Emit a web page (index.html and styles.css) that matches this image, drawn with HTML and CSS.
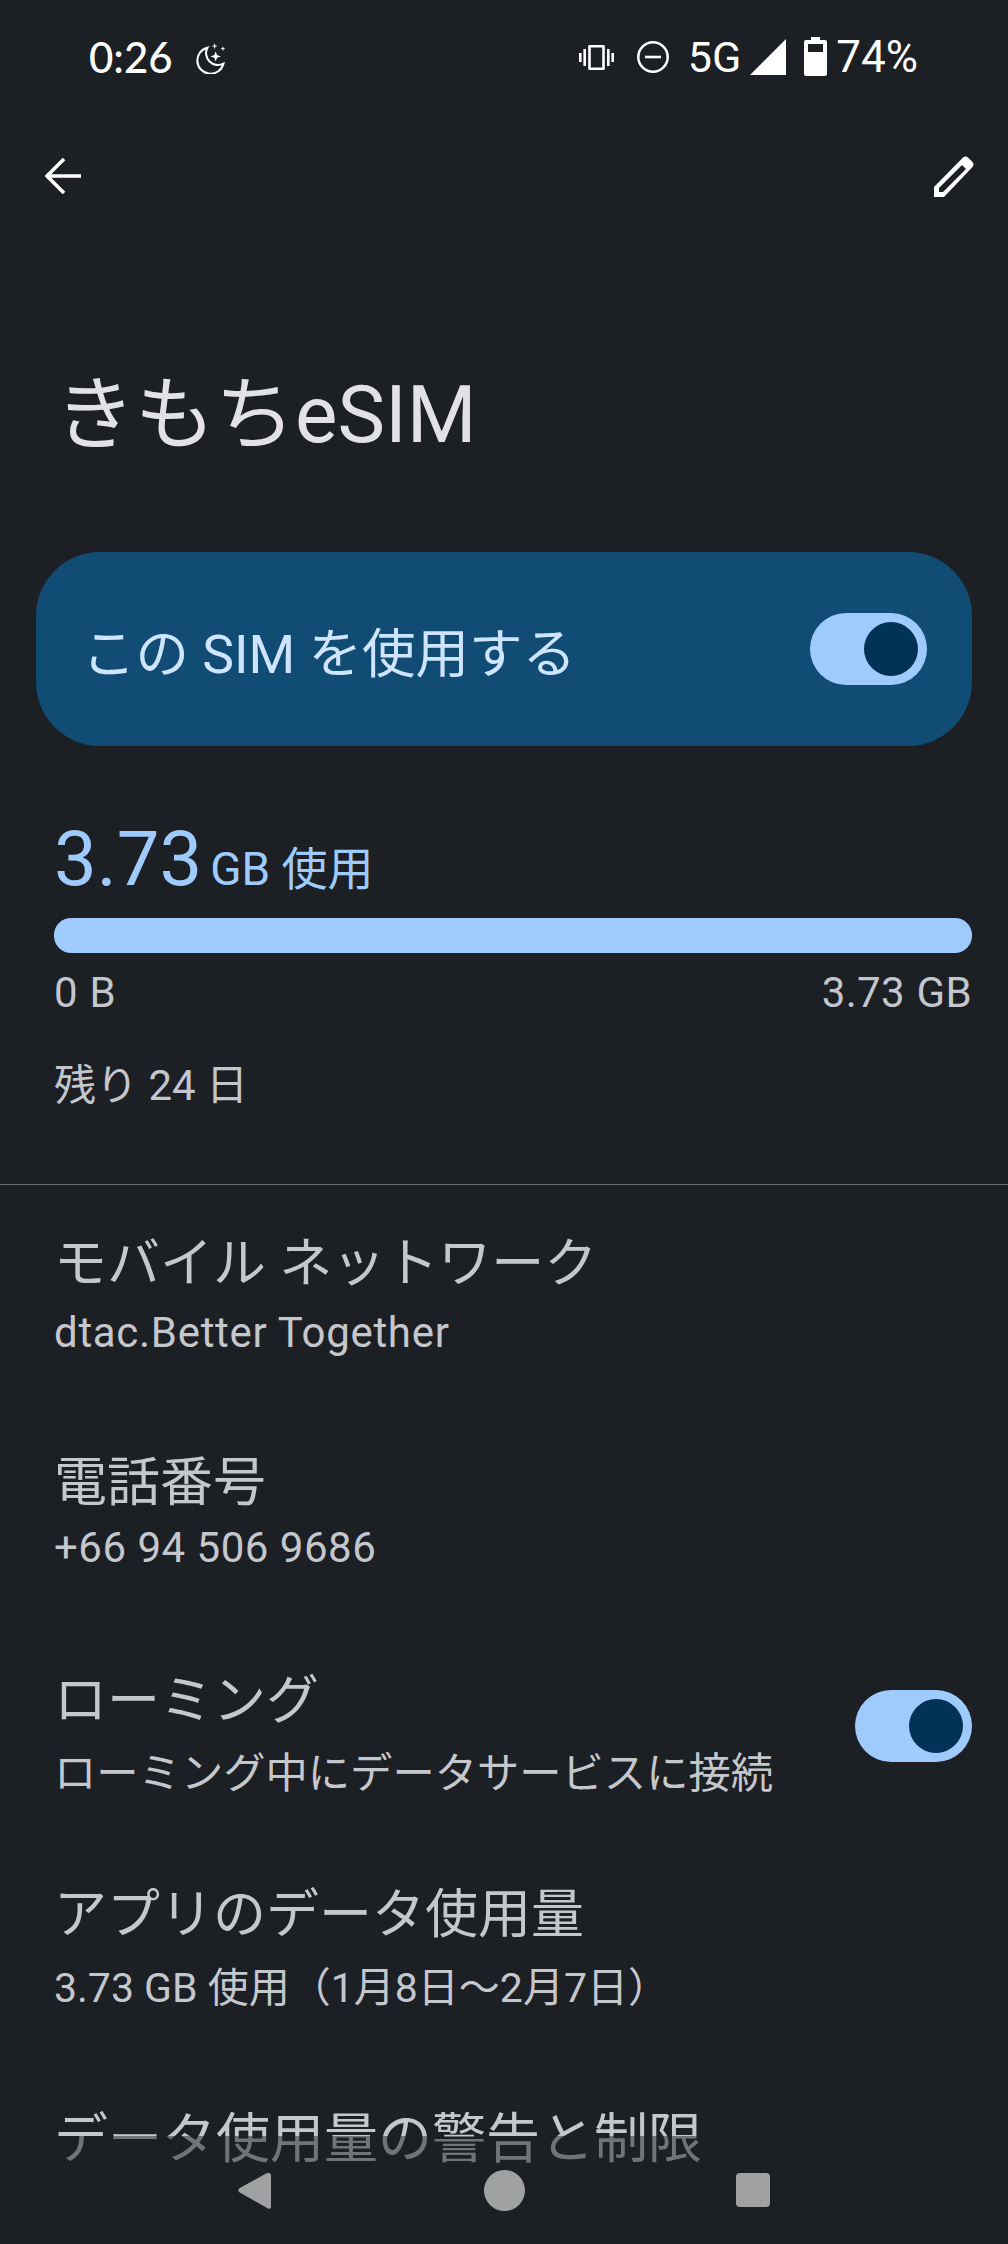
FILE: index.html
```html
<!DOCTYPE html>
<html lang="ja">
<head>
<meta charset="utf-8">
<title>きもちeSIM</title>
<link rel="stylesheet" href="styles.css">
</head>
<body>
<div class="page">
  <header class="status">
    <div class="status-left">
      <span class="time">0:26</span>
      <svg class="moon" viewBox="0 0 30 30"><path d="M12 4.500A12.800 12.800 0 1 0 27.500 20 11.500 11.500 0 0 1 12 4.500Z" fill="none" stroke="#fff" stroke-width="2"/><path d="M20 8l1.300 3.700L25 13l-3.700 1.300L20 18l-1.300-3.700L15 13l3.700-1.300ZM19 0l.7 2.300L22 3l-2.300.7L19 6l-.7-2.300L16 3l2.300-.7ZM27 3l.6 1.900 1.900.6-1.900.6L27 8l-.6-1.900-1.900-.6 1.900-.6Z" fill="#fff"/></svg>
    </div>
    <div class="status-right">
      <svg class="vib" viewBox="0 0 35 25"><path d="M10.500 1.300h14v22.400h-14Z" fill="none" stroke="#fff" stroke-width="2.600" stroke-linejoin="round"/><path d="M5.700 4v17M1.300 8v9M29.300 4v17M33.700 8v9" stroke="#fff" stroke-width="2.600" fill="none"/></svg>
      <svg class="dnd" viewBox="0 0 32 32"><circle cx="16" cy="16" r="14.700" fill="none" stroke="#fff" stroke-width="2.500"/><path d="M8 16h16" stroke="#fff" stroke-width="2.600"/></svg>
      <span class="net">5G</span>
      <svg class="signal" viewBox="0 0 36 36"><path d="M36 0v36H0Z" fill="#fff"/></svg>
      <svg class="batt" viewBox="0 0 23 39"><path d="M7 0h9v3h5a2 2 0 0 1 2 2v32a2 2 0 0 1-2 2H2a2 2 0 0 1-2-2V5a2 2 0 0 1 2-2h5Z" fill="#fff"/><path d="M4 7h15v8H4Z" fill="#1c1f24"/></svg>
      <span class="pct">74%</span>
    </div>
  </header>

  <nav class="appbar">
    <svg class="back" viewBox="0 0 36 36"><path d="M36 18H2M19 1 2 18l17 17" fill="none" stroke="#fff" stroke-width="3.600"/></svg>
    <svg class="edit" viewBox="0 0 42 42"><path fill-rule="evenodd" d="M1 32 30 2.500a4 4 0 0 1 5 0l4.500 4.500a4 4 0 0 1 0 5L11 42H1ZM6 33v4h4L33 14l-4-4Z" fill="#fff"/></svg>
  </nav>

  <h1 class="title">きもちeSIM</h1>

  <section class="sim-card">
    <span class="sim-label">この SIM を使用する</span>
    <span class="switch"><span class="thumb"></span></span>
  </section>

  <section class="usage">
    <div class="usage-head"><span class="usage-num">3.73</span><span class="usage-unit">GB 使用</span></div>
    <div class="bar"></div>
    <div class="bar-labels"><span>0 B</span><span>3.73 GB</span></div>
    <div class="remain">残り 24 日</div>
  </section>

  <hr class="divider">

  <ul class="list">
    <li class="row r1"><div><div class="row-title">モバイル ネットワーク</div><div class="row-sub latin">dtac.Better Together</div></div></li>
    <li class="row r2"><div><div class="row-title">電話番号</div><div class="row-sub latin">+66 94 506 9686</div></div></li>
    <li class="row r3"><div><div class="row-title">ローミング</div><div class="row-sub">ローミング中にデータサービスに接続</div></div><span class="switch"><span class="thumb"></span></span></li>
    <li class="row r4"><div><div class="row-title">アプリのデータ使用量</div><div class="row-sub mixed">3.73 GB 使用（1月8日～2月7日）</div></div></li>
    <li class="row r5"><div><div class="row-title">データ使用量の警告と制限</div></div></li>
  </ul>

  <footer class="navbar">
    <svg class="nav-back" viewBox="0 0 33 37"><path d="M31 1a2 2 0 0 1 2 2v32a2 2 0 0 1-3 1.500L1 20a3 3 0 0 1 0-3.500L29 1Z" fill="#a0a1a3"/></svg>
    <span class="nav-home"></span>
    <span class="nav-recent"></span>
  </footer>
</div>
</body>
</html>
```

FILE: styles.css
```css
* { box-sizing: border-box; }
html, body { margin: 0; padding: 0; }
body {
  background: #1c1f24;
  font-family: "Roboto", "Noto Sans CJK JP", sans-serif;
  color: #e2e2e6;
}
.page {
  position: relative;
  width: 1008px;
  height: 2244px;
  overflow: hidden;
  background: #1c1f24;
  display: flex;
  flex-direction: column;
}
.status {
  height: 80px;
  padding: 34px 90px 0 89px;
  display: flex;
  justify-content: space-between;
  flex: none;
}
.status-left, .status-right { display: flex; align-items: flex-start; }
.time {
  font-family: "Lato", "Roboto", sans-serif;
  font-size: 42px;
  font-weight: 500;
  line-height: 46px;
  color: #fff;
}
.moon { width: 31px; height: 31px; margin: 9px 0 0 22px; }
.vib { width: 35px; height: 25px; margin: 11px 23px 0 0; }
.dnd { width: 32px; height: 32px; margin: 7px 19px 0 0; }
.net, .pct {
  font-family: "Roboto", sans-serif;
  line-height: 46px;
  color: #fff;
}
.net { font-size: 43px; margin-right: 9px; }
.pct { font-size: 44px; }
.signal { width: 36px; height: 36px; margin: 5px 18px 0 0; }
.batt { width: 23px; height: 39px; margin: 3px 9px 0 0; }
.appbar {
  flex: none;
  height: 118px;
  padding: 0 33px 0 45px;
  display: flex;
  justify-content: space-between;
  align-items: flex-start;
}
.back { width: 36px; height: 36px; margin-top: 78px; }
.edit { width: 42px; height: 42px; margin-top: 75px; }
.title {
  margin: 167px 0 0;
  flex: none;
  padding: 0 0 0 55px;
  font-size: 80px;
  font-weight: 400;
  line-height: 100px;
  color: #e2e2e6;
}
.sim-card {
  flex: none;
  margin: 87px 36px 0;
  height: 194px;
  border-radius: 64px;
  background: #114c74;
  padding: 0 45px 0 46px;
  display: flex;
  justify-content: space-between;
  align-items: center;
}
.sim-label { font-size: 53.5px; color: #cfe5ff; }
.switch {
  flex: none;
  width: 117px;
  height: 72px;
  border-radius: 36px;
  background: #9ecafc;
  display: flex;
  align-items: center;
  justify-content: flex-end;
  padding-right: 9px;
}
.thumb { width: 54px; height: 54px; border-radius: 50%; background: #003258; }
.usage { flex: none; padding: 0 36px 0 54px; margin-top: 69px; }
.usage-head { display: flex; align-items: baseline; color: #9ecafc; height: 88px; line-height: 88px; }
.usage-num { font-size: 76px; }
.usage-unit { font-size: 46px; margin-left: 8px; }
.bar { height: 35px; border-radius: 17px; background: #9ecafc; margin-top: 15px; }
.bar-labels {
  display: flex;
  justify-content: space-between;
  font-size: 42px;
  letter-spacing: 0.3px;
  word-spacing: 1px;
  line-height: 50px;
  margin-top: 15px;
  color: #c3c6cc;
}
.remain { font-size: 42px; line-height: 56px; margin-top: 40px; color: #c3c6cc; }
.divider { flex: none; width: 100%; height: 1px; margin: 70px 0 0; border: 0; background: #6a6d72; }
.list { list-style: none; margin: 0; padding: 0 36px 0 54px; flex: none; }
.row { display: flex; justify-content: space-between; align-items: center; }
.row-title { font-size: 53px; line-height: 70px; color: #c4c7cc; }
.row-sub { font-size: 42.3px; line-height: 56px; margin-top: 5px; color: #c4c7cc; white-space: nowrap; }
.latin { font-size: 42px; letter-spacing: 0.7px; }
.r2 .latin { letter-spacing: 0.5px; }
.mixed { font-size: 41px; }
.r1 { margin-top: 44px; }
.r1 .row-sub { margin-top: 6px; }
.r2 { margin-top: 87px; }
.r2 .row-sub { margin-top: 2px; }
.r3 { margin-top: 90px; }
.r3 .row-sub { margin-top: 10px; }
.r3 .switch { margin-bottom: 16px; }
.r4 { margin-top: 78px; }
.r4 .row-sub { margin-top: 10px; }
.r5 { margin-top: 89px; }
.r5 .row-title { font-size: 54px; }
.navbar {
  position: absolute;
  left: 0;
  right: 0;
  bottom: 0;
  height: 108px;
  background: rgba(28, 31, 36, 0.5);
  padding: 34px 0 0 238px;
  display: flex;
  align-items: flex-start;
}
.nav-back { width: 33px; height: 37px; margin-top: 2px; }
.nav-home { width: 41px; height: 41px; border-radius: 50%; background: #a0a1a3; margin-left: 213px; }
.nav-recent { width: 34px; height: 34px; border-radius: 4px; background: #a0a1a3; margin: 3px 0 0 211px; }
```
